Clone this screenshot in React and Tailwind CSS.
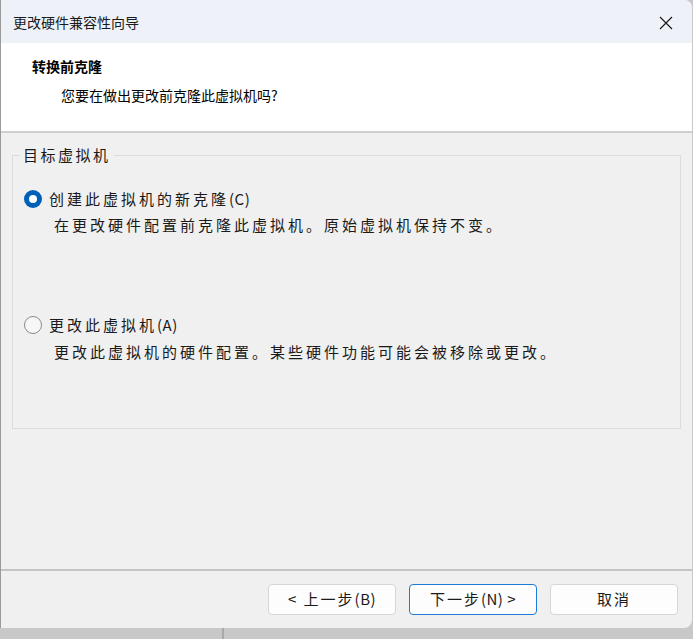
import React from "react";

const F = { fontFamily: '"Noto Sans CJK SC", "Noto Sans", sans-serif' };

function Radio({ checked }) {
  return checked ? (
    <span className="flex h-[18px] w-[18px] shrink-0 items-center justify-center rounded-full bg-[#005fb8]">
      <span className="h-[8px] w-[8px] rounded-full bg-white" />
    </span>
  ) : (
    <span className="h-[18px] w-[18px] shrink-0 rounded-full border border-[#8a8a8a] bg-[#f7f7f7]" />
  );
}

function Btn({ children, primary }) {
  return (
    <button
      className={
        "flex h-[31px] w-[128px] items-center justify-center rounded-[4px] bg-[#fdfdfd] text-[15px] tracking-[2px] text-[#1b1b1b] " +
        (primary ? "border border-[#1d7bd6]" : "border border-[#d6d6d6]")
      }
    >
      {children}
    </button>
  );
}

export default function App() {
  return (
    <div className="flex h-[639px] w-[693px] flex-col bg-[#c8c8c8]" style={F}>
      <div className="flex h-[628px] w-[692px] flex-col overflow-hidden rounded-tr-[8px] rounded-br-[8px] border-l border-[#9a9a9a] bg-[#f0f0f0]">
        {/* title bar */}
        <div className="flex h-[43px] shrink-0 items-center justify-between bg-[#eef2f8] pl-[12px] pr-[19px]">
          <span className="text-[14px] leading-none text-[#1a1a1a]">更改硬件兼容性向导</span>
          <svg width="14" height="14" viewBox="0 0 14 14" className="mt-[2px]">
            <path d="M1 1 L13 13 M13 1 L1 13" stroke="#1a1a1a" strokeWidth="1.2" fill="none" />
          </svg>
        </div>
        {/* header */}
        <div className="flex h-[88px] shrink-0 flex-col bg-white pl-[31px]">
          <div className="mt-[13px] text-[14px] font-bold leading-[20px] text-black">转换前克隆</div>
          <div className="ml-[29px] mt-[9px] text-[14px] leading-[20px] text-black">您要在做出更改前克隆此虚拟机吗?</div>
        </div>
        <div className="h-[2px] shrink-0 bg-[#cfcfcf]" />
        {/* body */}
        <div className="flex flex-1 flex-col px-[11px] pt-[10px]">
          <fieldset className="h-[286px] w-[669px] border border-[#dcdcdc] pl-[11px]">
            <legend className="-ml-[4px] px-[3px] text-[15px] leading-[24px] tracking-[2.5px] text-[#1a1a1a]">目标虚拟机</legend>
            <div className="mt-[20px] flex flex-col">
              <div className="flex items-center gap-[7px]">
                <Radio checked />
                <span className="text-[15px] leading-[24px] tracking-[3px] text-[#1a1a1a]">
                  创建此虚拟机的新克隆<span className="tracking-[0.5px]">(C)</span>
                </span>
              </div>
              <div className="ml-[30px] mt-[2px] text-[15px] leading-[24px] tracking-[3px] text-[#1a1a1a]">
                在更改硬件配置前克隆此虚拟机。原始虚拟机保持不变。
              </div>
              <div className="mt-[76px] flex items-center gap-[7px]">
                <Radio />
                <span className="text-[15px] leading-[24px] tracking-[3px] text-[#1a1a1a]">
                  更改此虚拟机<span className="tracking-[0.5px]">(A)</span>
                </span>
              </div>
              <div className="ml-[30px] mt-[3px] text-[15px] leading-[24px] tracking-[3px] text-[#1a1a1a]">
                更改此虚拟机的硬件配置。某些硬件功能可能会被移除或更改。
              </div>
            </div>
          </fieldset>
        </div>
        <div className="h-[2px] shrink-0 bg-[#c4c4c4]" />
        {/* footer */}
        <div className="flex h-[57px] shrink-0 items-start justify-end gap-[13px] pr-[14px] pt-[13px]">
          <Btn>&lt; 上一步<span className="tracking-[0.5px]">(B)</span></Btn>
          <Btn primary>下一步<span className="tracking-[0.5px]">(N) &gt;</span></Btn>
          <Btn>取消</Btn>
        </div>
      </div>
      <div className="flex flex-1">
        <div className="w-[222px]" />
        <div className="w-[2px] bg-[#a9a9a9]" />
      </div>
    </div>
  );
}
